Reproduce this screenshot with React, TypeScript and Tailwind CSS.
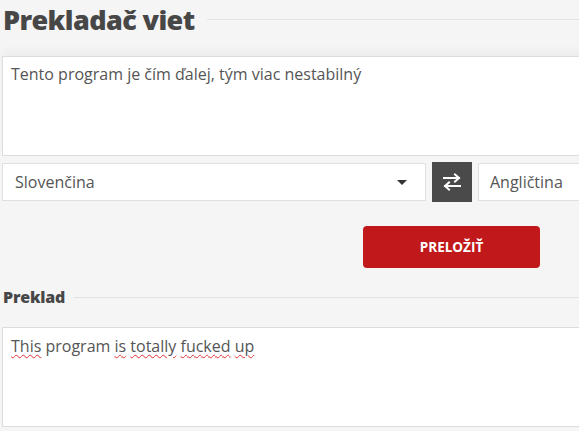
export default function App() {
  return (
    <div className="w-[579px] h-[431px] overflow-hidden bg-[#f5f5f5] text-[#555] font-['Open_Sans',sans-serif]">
      <div className="w-[680px] pl-[2px]">
        <div className="flex items-center h-[39px] gap-[12px]">
          <h1 className="text-[27px] leading-none font-extrabold text-[#474747] tracking-[-0.6px] pl-[1px]">Prekladač viet</h1>
          <div className="flex-1 h-px bg-[#e3e3e3]" />
        </div>

        <div className="mt-[17px] h-[100px] bg-white border border-[#dcdcdc] shadow-[0_-6px_8px_rgba(0,0,0,0.03)] px-[8px] pt-[6px] text-[16px] leading-[22px]">
          Tento program je čím ďalej, tým viac nestabilný
        </div>

        <div className="mt-[6px] flex items-start gap-[6px]">
          <div className="mt-[1px] w-[424px] h-[38px] bg-white border border-[#e0e0e0] flex items-center justify-between pl-[12px] pr-[18px] text-[16px]">
            <span>Slovenčina</span>
            <span className="w-0 h-0 border-l-[5px] border-r-[5px] border-t-[5px] border-l-transparent border-r-transparent border-t-[#333]" />
          </div>
          <button className="w-[40px] h-[40px] bg-[#4a4a4a] flex items-center justify-center">
            <svg width="20" height="18" viewBox="0 0 20 18" fill="none" stroke="white" strokeWidth="2" strokeLinecap="square">
              <path d="M2 5h15M13 1.5l4 3.5-4 3.5" />
              <path d="M18 13H3M7 9.5l-4 3.5 4 3.5" />
            </svg>
          </button>
          <div className="mt-[1px] flex-1 h-[38px] bg-white border border-[#e0e0e0] flex items-center pl-[11px] text-[16px]">
            Angličtina
          </div>
        </div>

        <div className="mt-[24px] pl-[361px]">
          <button className="w-[177px] h-[42px] rounded-[4px] bg-[#c1191b] text-white text-[13.5px] font-bold tracking-[0px]">
            PRELOŽIŤ
          </button>
        </div>

        <div className="mt-[19px] flex items-center h-[20px] gap-[9px]">
          <h2 className="text-[16px] leading-none font-extrabold text-[#474747] tracking-[-0.2px] pl-[1px]">Preklad</h2>
          <div className="flex-1 h-px bg-[#e3e3e3]" />
        </div>

        <div className="mt-[20px] h-[100px] bg-white border border-[#dcdcdc] px-[8px] pt-[7px] text-[16px] leading-[22px]">
          <span className="underline decoration-wavy decoration-[#e03030] underline-offset-[2px] decoration-1">This</span>{' '}
          program{' '}
          <span className="underline decoration-wavy decoration-[#e03030] underline-offset-[2px] decoration-1">is</span>{' '}
          <span className="underline decoration-wavy decoration-[#e03030] underline-offset-[2px] decoration-1">totally</span>{' '}
          <span className="underline decoration-wavy decoration-[#e03030] underline-offset-[2px] decoration-1">fucked</span>{' '}
          <span className="underline decoration-wavy decoration-[#e03030] underline-offset-[2px] decoration-1">up</span>
        </div>
      </div>
    </div>
  )
}
